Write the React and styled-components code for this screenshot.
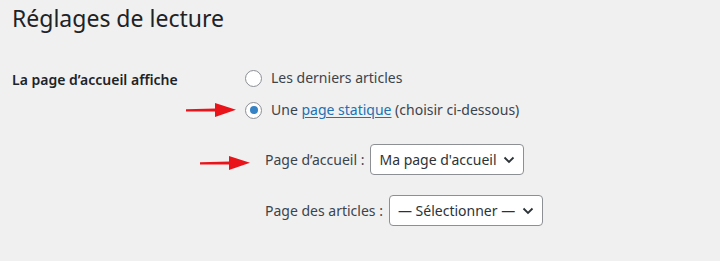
import styled, { createGlobalStyle } from "styled-components";

const GlobalStyle = createGlobalStyle`
  html, body {
    margin: 0;
    padding: 0;
    background: #f0f0f1;
  }
  body {
    font-family: "Noto Sans", "Open Sans", sans-serif;
    color: #3c434a;
    font-size: 14px;
  }
`;

const Wrap = styled.div`
  width: 720px;
  height: 261px;
  padding: 0 12px;
  box-sizing: border-box;
  overflow: hidden;
`;

const Title = styled.h1`
  margin: 0;
  padding-top: 4px;
  font-size: 23px;
  font-weight: 400;
  line-height: 29px;
  color: #1d2327;
`;

const FormRow = styled.div`
  display: flex;
  margin-top: 35px;
`;

const RowLabel = styled.div`
  width: 233px;
  flex-shrink: 0;
  font-weight: 600;
  color: #1d2327;
  line-height: 20px;
  padding-top: 2px;
`;

const Options = styled.div`
  display: flex;
  flex-direction: column;
  gap: 12px;
`;

const Option = styled.label`
  position: relative;
  display: flex;
  align-items: center;
  gap: 9px;
  line-height: 20px;
`;

const Radio = styled.span`
  width: 15px;
  height: 15px;
  border: 1px solid #8c8f94;
  border-radius: 50%;
  background: #fff;
  display: flex;
  align-items: center;
  justify-content: center;
  flex-shrink: 0;

  &::after {
    content: "";
    display: ${({ $checked }) => ($checked ? "block" : "none")};
    width: 8px;
    height: 8px;
    border-radius: 50%;
    background: #3582c4;
  }
`;

const Link = styled.a`
  color: #2271b1;
  text-decoration: underline;
  text-underline-offset: 2px;
`;

const Arrow = styled.svg`
  position: absolute;
  left: ${({ $left }) => $left}px;
  top: ${({ $top }) => $top}px;
`;

const SubFields = styled.div`
  display: flex;
  flex-direction: column;
  gap: 20px;
  margin: 24px 0 0 253px;
`;

const Field = styled.div`
  position: relative;
  display: flex;
  align-items: center;
  gap: 6px;
`;

const Select = styled.div`
  width: 154px;
  height: 31px;
  box-sizing: border-box;
  border: 1px solid #8c8f94;
  border-radius: 4px;
  background: #fff;
  display: flex;
  align-items: center;
  justify-content: space-between;
  padding: 0 8px 0 8px;
  font-size: 14px;
  color: #2c3338;
  white-space: nowrap;
`;

function RedArrow({ left, top }) {
  return (
    <Arrow $left={left} $top={top} width="50" height="16" viewBox="0 0 50 16">
      <path d="M0 7.2 L30 6.4 L30 9.4 L0 9.6 Z" fill="#e8141a" />
      <path d="M29 1 L50 7.8 L29 15 Z" fill="#e8141a" />
    </Arrow>
  );
}

function Chevron() {
  return (
    <svg width="12" height="8" viewBox="0 0 12 8">
      <path d="M1.5 1.5 L6 6 L10.5 1.5" fill="none" stroke="#2c3338" strokeWidth="1.8" />
    </svg>
  );
}

export default function App() {
  return (
    <>
      <GlobalStyle />
      <Wrap>
        <Title>Réglages de lecture</Title>
        <FormRow>
          <RowLabel>La page d’accueil affiche</RowLabel>
          <Options>
            <Option>
              <Radio />
              Les derniers articles
            </Option>
            <Option>
              <RedArrow left={-59} top={2} />
              <Radio $checked />
              <span>
                Une <Link href="#">page statique</Link> (choisir ci-dessous)
              </span>
            </Option>
          </Options>
        </FormRow>
        <SubFields>
          <Field>
            <RedArrow left={-65} top={11} />
            Page d’accueil :
            <Select>
              Ma page d'accueil
              <Chevron />
            </Select>
          </Field>
          <Field>
            Page des articles :
            <Select>
              — Sélectionner —
              <Chevron />
            </Select>
          </Field>
        </SubFields>
      </Wrap>
    </>
  );
}
